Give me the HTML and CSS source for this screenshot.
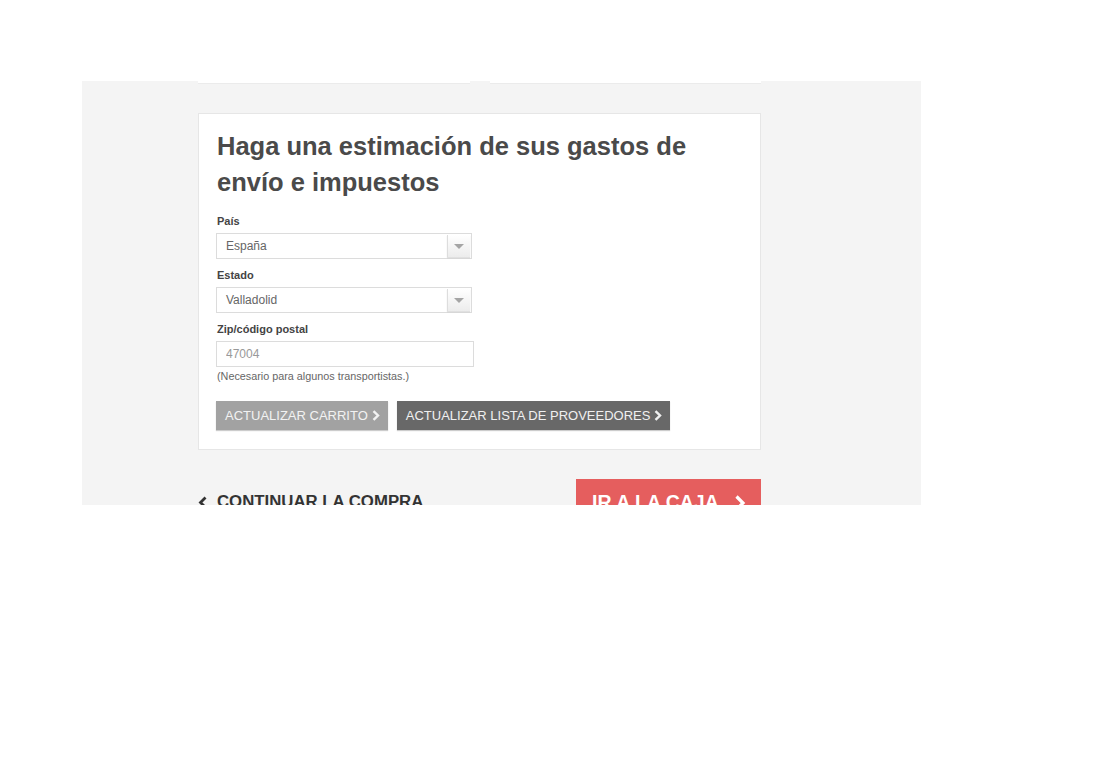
FILE: index.html
```html
<!DOCTYPE html>
<html lang="es">
  <head>
    <meta charset="UTF-8" />
    <meta name="viewport" content="width=device-width, initial-scale=1.0" />
    <title>Carrito</title>
    <link rel="stylesheet" href="styles.css">
  </head>

  <body>
    <main class="cart">
      <div class="cart-top">
        <div class="top-box top-box-wide"></div>
        <div class="top-box"></div>
      </div>

      <section class="estimate">
        <h2>Haga una estimación de sus gastos de envío e impuestos</h2>
        <form class="estimate-form">
          <label class="field-label">País</label>
          <div class="select">
            <span>España</span>
            <span class="select-arrow"></span>
          </div>

          <label class="field-label">Estado</label>
          <div class="select">
            <span>Valladolid</span>
            <span class="select-arrow"></span>
          </div>

          <label class="field-label">Zip/código postal</label>
          <input class="zip" value="47004" />
          <p class="hint">(Necesario para algunos transportistas.)</p>

          <div class="actions">
            <button type="button" class="btn btn-light">
              Actualizar carrito
              <svg width="8" height="11" viewBox="0 0 8 11"><path d="M1.5 1.2 L6 5.5 L1.5 9.8" fill="none" stroke="currentColor" stroke-width="2.4"/></svg>
            </button>
            <button type="button" class="btn btn-dark">
              Actualizar lista de proveedores
              <svg width="8" height="11" viewBox="0 0 8 11"><path d="M1.5 1.2 L6 5.5 L1.5 9.8" fill="none" stroke="currentColor" stroke-width="2.4"/></svg>
            </button>
          </div>
        </form>
      </section>

      <div class="cart-nav">
        <a href="#" class="continue">
          <svg width="10" height="13" viewBox="0 0 10 13"><path d="M7.5 1.5 L2.5 6.5 L7.5 11.5" fill="none" stroke="currentColor" stroke-width="2.8"/></svg>
          Continuar la compra
        </a>
        <a href="#" class="checkout">
          Ir a la caja
          <svg width="12" height="16" viewBox="0 0 12 16"><path d="M2.5 1.5 L9 8 L2.5 14.5" fill="none" stroke="currentColor" stroke-width="3.2"/></svg>
        </a>
      </div>
    </main>
  </body>
</html>
```

FILE: styles.css
```css
body {
  margin: 0;
  background: #fff;
  font-family: "Liberation Sans", Arial, sans-serif;
}

.cart {
  margin: 81px 0 0 82px;
  width: 839px;
  height: 424px;
  overflow: hidden;
  background: #f4f4f4;
  padding: 0 160px 0 116px;
  box-sizing: border-box;
}

.cart-top {
  display: flex;
  gap: 20px;
  height: 3px;
}

.top-box {
  width: 271px;
  height: 2px;
  background: #fff;
  border-bottom: 1px solid #ebebeb;
}

.top-box-wide {
  width: 272px;
}

.estimate {
  margin-top: 29px;
  background: #fff;
  border: 1px solid #e6e6e6;
  padding: 14px 17px 19px;
}

.estimate h2 {
  margin: 0 0 13px 1px;
  font-size: 25.5px;
  line-height: 36px;
  color: #4a4a4a;
  font-weight: bold;
  max-width: 520px;
}

.estimate-form {
  display: flex;
  flex-direction: column;
  align-items: flex-start;
}

.field-label {
  font-size: 11px;
  line-height: 16px;
  font-weight: bold;
  color: #444;
  margin: 0 0 4px 1px;
}

.select {
  width: 256px;
  height: 26px;
  box-sizing: border-box;
  border: 1px solid #dcdcdc;
  display: flex;
  align-items: center;
  justify-content: space-between;
  font-size: 12px;
  color: #666;
  padding-left: 9px;
  margin-bottom: 8px;
}

.select-arrow {
  width: 22px;
  height: 22px;
  margin-right: 1px;
  border-left: 1px solid #ddd;
  background: linear-gradient(#fff, #ececec);
  box-shadow: 0 1px 1px rgba(0, 0, 0, 0.12);
  position: relative;
}

.select-arrow::after {
  content: "";
  position: absolute;
  left: 6px;
  top: 9px;
  border-left: 5px solid transparent;
  border-right: 5px solid transparent;
  border-top: 5px solid #a5a5a5;
}

.zip {
  width: 258px;
  height: 26px;
  box-sizing: border-box;
  border: 1px solid #dcdcdc;
  font-family: inherit;
  font-size: 12px;
  color: #999;
  padding: 0 9px;
  margin: 0;
  outline: none;
}

.hint {
  margin: 3px 0 18px 1px;
  font-size: 10.8px;
  line-height: 13px;
  color: #666;
}

.actions {
  display: flex;
  gap: 9px;
}

.btn {
  height: 29px;
  border: none;
  padding: 0 8px 0 9px;
  font-family: inherit;
  font-size: 13px;
  text-transform: uppercase;
  display: flex;
  align-items: center;
  gap: 4px;
  cursor: pointer;
  box-shadow: 0 1px 1px rgba(0, 0, 0, 0.2);
}

.btn-light {
  background: #a2a2a2;
  color: #f2f2f2;
}

.btn-dark {
  background: #686868;
  color: #f0f0f0;
}

.cart-nav {
  margin-top: 29px;
  display: flex;
  justify-content: space-between;
  align-items: flex-start;
}

.continue {
  margin-top: 13px;
  display: flex;
  align-items: center;
  gap: 9px;
  color: #333;
  text-decoration: none;
  font-weight: bold;
  font-size: 16.8px;
  text-transform: uppercase;
}

.checkout {
  width: 185px;
  box-sizing: border-box;
  background: #e55e5e;
  color: #fff;
  text-decoration: none;
  font-weight: bold;
  font-size: 19.5px;
  text-transform: uppercase;
  padding: 12px 15px 10px 16px;
  display: flex;
  align-items: center;
  justify-content: space-between;
}
```
